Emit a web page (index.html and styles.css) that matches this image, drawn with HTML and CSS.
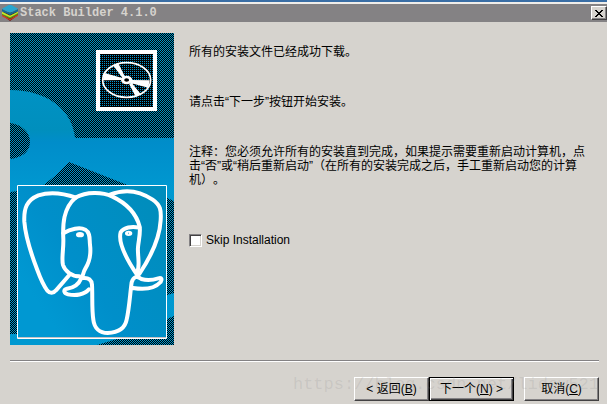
FILE: index.html
```html
<!DOCTYPE html>
<html lang="zh-CN">
<head>
<meta charset="utf-8">
<title>Stack Builder 4.1.0</title>
<link rel="stylesheet" href="styles.css">
</head>
<body>
<div class="window">
  <header class="titlebar">
    <svg class="app-icon" viewBox="0 0 48 48" aria-hidden="true">
      <path fill="#6b1410" d="M0 30l24 18 24-18v-8H0z"/>
      <path fill="#d83a20" d="M0 28l24 15 24-15v4L24 46 0 34z"/>
      <path fill="#5a9618" d="M0 20l24 12 24-12v8L24 41 0 29z"/>
      <path fill="#c6e72c" d="M0 20l24 12 24-12v4L24 37 0 26z"/>
      <path fill="#106d94" d="M0 12l24 12 24-12v7L24 30 0 19z"/>
      <path fill="#29a6ce" d="M0 11L20 0h8l20 11-24 12z"/>
    </svg>
    <h1 class="title">Stack Builder 4.1.0</h1>
    <button class="close" type="button" aria-label="关闭">
      <svg viewBox="0 0 8 7" width="8" height="7" shape-rendering="crispEdges" aria-hidden="true"><path d="M0 0h2v1h1v1h2V1h1V0h2v1H7v1H6v1H5v1h1v1h1v1h1v1H6V6H5V5H3v1H2v1H0V6h1V5h1V4h1V3H2V2H1V1H0z"/></svg>
    </button>
  </header>
  <main class="content">
    <svg class="art" viewBox="0 0 164 312" width="164" height="312" aria-hidden="true">
      <defs>
        <pattern id="dither" width="2" height="2" patternUnits="userSpaceOnUse">
          <path fill="#000" shape-rendering="crispEdges" d="M0 0h1v1H0zM1 1h1v1H1z"/>
        </pattern>
        <pattern id="dots" width="2" height="2" patternUnits="userSpaceOnUse">
          <path fill="#0094ce" shape-rendering="crispEdges" d="M0 0h1v1H0z"/>
        </pattern>
        <linearGradient id="sea" x1="0" y1="0" x2="0" y2="1">
          <stop offset="0.18" stop-color="#0092c4"/>
          <stop offset="0.31" stop-color="#008fbd"/>
          <stop offset="0.35" stop-color="#008dca"/>
          <stop offset="0.5" stop-color="#0098d0"/>
          <stop offset="1" stop-color="#0098d0"/>
        </linearGradient>
        <linearGradient id="panel" x1="0" y1="1" x2="1" y2="0.3">
          <stop offset="0.2" stop-color="#0098d2"/>
          <stop offset="0.5" stop-color="#008fca"/>
          <stop offset="1" stop-color="#008dbd"/>
        </linearGradient>
      </defs>
      <path fill="url(#sea)" d="M0 0h164v312H0z"/>
      <g fill="url(#dither)">
        <path d="M0 0h164v105H65C63 78 38 57 0 57z"/>
        <path d="M0 90c11 1 20 9 20 19S11 125 0 126z"/>
        <path d="M59 129l61 24H32l8-6c8-6 13-12 19-18z"/>
        <path d="M0 159l8-1v143H0zM157 165l7 3v92l-7 2zM164 283v29H87l20-6h50v-20z"/>
      </g>
      <path fill="#000" d="M88 19h57v57H88z"/>
      <path fill="url(#dots)" d="M88 19h57v57H88z"/>
      <path fill="none" stroke="#fff" stroke-width="4" d="M88 19h57v57H88z"/>
      <g transform="translate(-10 -8) scale(.3333)" fill="none" stroke="#fff">
        <ellipse cx="380" cy="165" rx="72" ry="52" stroke-width="5"/>
        <path fill="#fff" stroke="none" d="M339 121l16-6 20 40-8 3zM311 143l56 16-3 6-55 1zM394 165l55 1-4 22-54-14zM387 176l8-3 27 34-16 6z"/>
        <ellipse cx="380" cy="165" rx="12" ry="8" stroke-width="10"/>
        <ellipse cx="380" cy="165" rx="7" ry="5" fill="#000" stroke="none"/>
      </g>
      <path fill="url(#panel)" stroke="#fff" d="M7.500 152.500h149v153H7.500z"/>
      <path stroke="#c6c3c6" d="M8 304.500h148"/>
      <g transform="translate(-10 142) scale(.3333)" fill="none" stroke="#fff" stroke-width="12" stroke-linejoin="round" stroke-linecap="round">
        <path d="M228 68C188 54 150 50 115 61 81 75 71 99 73 140c4 53 22 101 39 145 8 22 19 47 30 62 8 9 18 9 26-1l40-46"/>
        <path d="M238 304c-22 0-43-15-49-34-5-18 2-47 1-78-2-43-1-92 38-125 30-17 79-17 108-3 42 20 73 51 83 91 3 20-3 40-5 62-2 24 7 53-2 73"/>
        <path d="M330 59c47-19 87-13 128 15 24 17 26 31 24 62-3 54-32 113-64 161"/>
        <path d="M190 175c22-13 49-20 66-11 16 10 12 28 14 45 4 31-2 53-14 72-8 13-6 23-13 30-8 20-22 27-42 30-13 3-9 14 3 17 22 5 49 2 63-15"/>
        <path d="M418 158c-23-5-47-1-56 14-9 32 23 89 51 130"/>
        <path d="M249 309c17-2 26 6 27 20 2 36-1 72 4 105 3 25 19 40 43 40 30-1 52-14 57-40 8-35 10-75 15-112 5-15 14-22 29-10 18 5 32 4 51-2 11-3 12 4 7 11-20 22-48 24-83 18"/>
        <ellipse cx="240" cy="179" rx="6" ry="2"/>
        <ellipse cx="386" cy="175" rx="5" ry="2"/>
      </g>
    </svg>
    <div class="message">
      <p>所有的安装文件已经成功下载。</p>
      <p>请点击“下一步”按钮开始安装。</p>
      <p class="note">注释：您必须允许所有的安装直到完成，如果提示需要重新启动计算机，点击“否”或“稍后重新启动”（在所有的安装完成之后，手工重新启动您的计算机）。</p>
      <label class="skip"><input type="checkbox">Skip Installation</label>
    </div>
  </main>
  <footer class="footer">
    <div class="buttons">
      <button class="btn" type="button">&lt; 返回(<u>B</u>)</button>
      <button class="btn btn-default" type="button">下一个(<u>N</u>) &gt;</button>
      <button class="btn btn-cancel" type="button">取消(<u>C</u>)</button>
    </div>
    <span class="watermark">https://blog.csdn.net/lidew521</span>
  </footer>
</div>
</body>
</html>
```
FILE: styles.css
```css
* { box-sizing: border-box; }

body {
  margin: 0;
  background: #d6d3ce;
  color: #000;
  font: 12px/14px "Liberation Sans", "Noto Sans CJK SC", sans-serif;
  text-spacing-trim: space-all;
}

.window {
  border-top: 2px solid #3a6ea5;
}

.titlebar {
  display: flex;
  align-items: center;
  height: 20px;
  padding-left: 2px;
  border-top: 2px solid #f0eeea;
  background: #848284;
}

.app-icon {
  width: 16px;
  height: 16px;
  margin-right: 2px;
}

.title {
  flex: 1;
  margin: 0;
  color: #d6d3ce;
  font: bold 12px/18px "Liberation Mono", monospace;
}

.close {
  display: flex;
  align-items: center;
  justify-content: center;
  width: 16px;
  height: 14px;
  padding: 0;
  border: 1px solid;
  border-color: #fff #424142 #424142 #fff;
  background: #d6d3ce;
  box-shadow: inset -1px -1px #848284;
}

.content {
  display: flex;
  gap: 15px;
  padding: 11px 21px 15px 10px;
}

.art {
  display: block;
  flex: none;
}

.message {
  flex: 1;
  padding-top: 12px;
}

.message p {
  margin: 0 0 36px;
}

.message .note {
  margin-bottom: 46px;
}

.skip {
  display: flex;
  align-items: center;
  gap: 4px;
}

.skip input {
  appearance: none;
  width: 13px;
  height: 13px;
  margin: 0;
  border: 1px solid;
  border-color: #848284 #fff #fff #848284;
  background: #fff;
  box-shadow: inset 1px 1px #424142, inset -1px -1px #d6d3ce;
}

.footer {
  position: relative;
  margin: 0 8px 0 10px;
  border-top: 1px solid #848284;
  box-shadow: inset 0 1px #fff;
}

.buttons {
  display: flex;
  justify-content: flex-end;
  padding-top: 16px;
}

.btn {
  width: 75px;
  height: 24px;
  padding: 0;
  border: 1px solid;
  border-color: #fff #424142 #424142 #fff;
  background: #d6d3ce;
  color: #000;
  font: inherit;
  box-shadow: inset -1px -1px #848284;
}

.btn-default {
  width: 85px;
  border-color: #000;
  box-shadow: inset 1px 1px #fff, inset -1px -1px #424142, inset -2px -2px #848284;
}

.btn-cancel {
  margin-left: 10px;
}

.watermark {
  position: absolute;
  top: 14px;
  right: 0;
  color: rgba(130, 130, 130, 0.16);
  font: 17px/20px "Liberation Mono", monospace;
  pointer-events: none;
}
```
